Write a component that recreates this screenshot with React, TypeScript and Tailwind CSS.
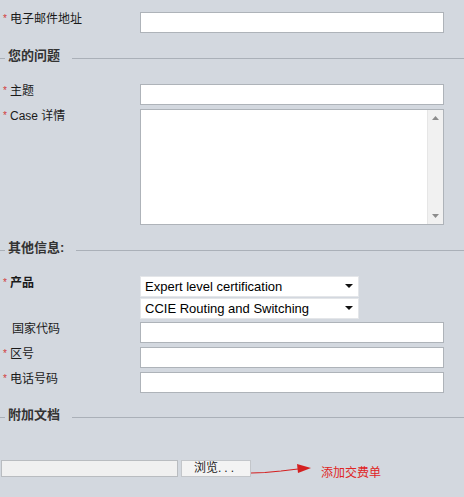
import React from "react";

const font = "font-['Liberation_Sans','Noto_Sans_CJK_SC',sans-serif]";

const Star = () => (
  <span className="w-[10px] shrink-0 pl-[3px] mt-[3px] text-[10px] leading-[10px] text-[#d23a3a]">*</span>
);

const Label = ({ text, required, bold }: { text: string; required?: boolean; bold?: boolean }) => (
  <div className="w-[140px] shrink-0 -mt-[1px] flex items-start">
    {required ? <Star /> : <span className="w-[12px] shrink-0" />}
    <span className={`text-[12px] leading-[16px] text-[#1a1a1a] ${bold ? "font-bold" : ""}`}>{text}</span>
  </div>
);

const TextInput = () => (
  <div className="w-[304px] h-[21px] bg-white border border-[#aeb3b9]" />
);

const Section = ({ title, className }: { title: string; className: string }) => (
  <div className={`flex items-start h-[20px] ${className}`}>
    <div className="w-[5px] h-px bg-[#aab0b8] mt-[12px]" />
    <span className="ml-[3px] text-[13px] leading-[20px] font-bold text-[#333]">{title}</span>
    <div className="flex-1 h-px bg-[#aab0b8] mt-[12px] ml-[12px]" />
  </div>
);

const Select = ({ value }: { value: string }) => (
  <div className="w-[219px] h-[21px] bg-white border border-[#e4e6e9] flex items-center justify-between pl-[4px] pr-[4px]">
    <span className="text-[13px] leading-[16px] text-black">{value}</span>
    <svg width="9" height="5" viewBox="0 0 9 5">
      <polygon points="0,0 8,0 4,4" fill="#111" />
    </svg>
  </div>
);

export default function App() {
  return (
    <div className={`w-[464px] h-[497px] bg-[#d3d8df] pt-[12px] overflow-hidden ${font}`}>
      <div className="flex items-start">
        <Label text="电子邮件地址" required />
        <TextInput />
      </div>

      <Section title="您的问题" className="mt-[13px]" />

      <div className="flex items-start mt-[18px]">
        <Label text="主题" required />
        <TextInput />
      </div>
      <div className="flex items-start mt-[4px]">
        <Label text="Case 详情" required />
        <div className="w-[304px] h-[116px] bg-white border border-[#aeb3b9] flex justify-end">
          <div className="w-[16px] h-full bg-[#f1f1f1] border-l border-[#e6e6e6] flex flex-col items-center justify-between py-[6px]">
            <svg width="7" height="4" viewBox="0 0 7 4">
              <polygon points="0,4 7,4 3.5,0" fill="#8c8c8c" />
            </svg>
            <svg width="7" height="4" viewBox="0 0 7 4">
              <polygon points="0,0 7,0 3.5,4" fill="#8c8c8c" />
            </svg>
          </div>
        </div>
      </div>

      <Section title="其他信息:" className="mt-[13px]" />

      <div className="flex items-start mt-[18px]">
        <Label text="产品" required bold />
        <div className="flex flex-col gap-[1px]">
          <Select value="Expert level certification" />
          <Select value="CCIE Routing and Switching" />
        </div>
      </div>
      <div className="flex items-start mt-[3px]">
        <Label text="国家代码" />
        <TextInput />
      </div>
      <div className="flex items-start mt-[4px]">
        <Label text="区号" required />
        <TextInput />
      </div>
      <div className="flex items-start mt-[4px]">
        <Label text="电话号码" required />
        <TextInput />
      </div>

      <Section title="附加文档" className="mt-[12px]" />

      <div className="flex items-start mt-[35px]">
        <div className="ml-[1px] w-[177px] h-[17px] bg-[#f0f0f0] border border-[#b9bcc0]" />
        <div className="ml-[3px] w-[70px] h-[17px] bg-[#f3f3f3] border border-[#c3c6ca] pl-[12px] text-[12px] leading-[15px] text-[#222]">
          浏览<span className="tracking-[3px]">...</span>
        </div>
        <svg width="62" height="17" viewBox="0 0 62 17" className="shrink-0">
          <polyline points="0,13 14,12.5 30,11 47,9" fill="none" stroke="#d42020" strokeWidth="1.2" />
          <polygon points="46,4 60,8 47,13" fill="#d42020" />
        </svg>
        <span className="ml-[8px] mt-[5px] text-[12px] leading-[16px] text-[#e02525]">添加交费单</span>
      </div>
    </div>
  );
}
